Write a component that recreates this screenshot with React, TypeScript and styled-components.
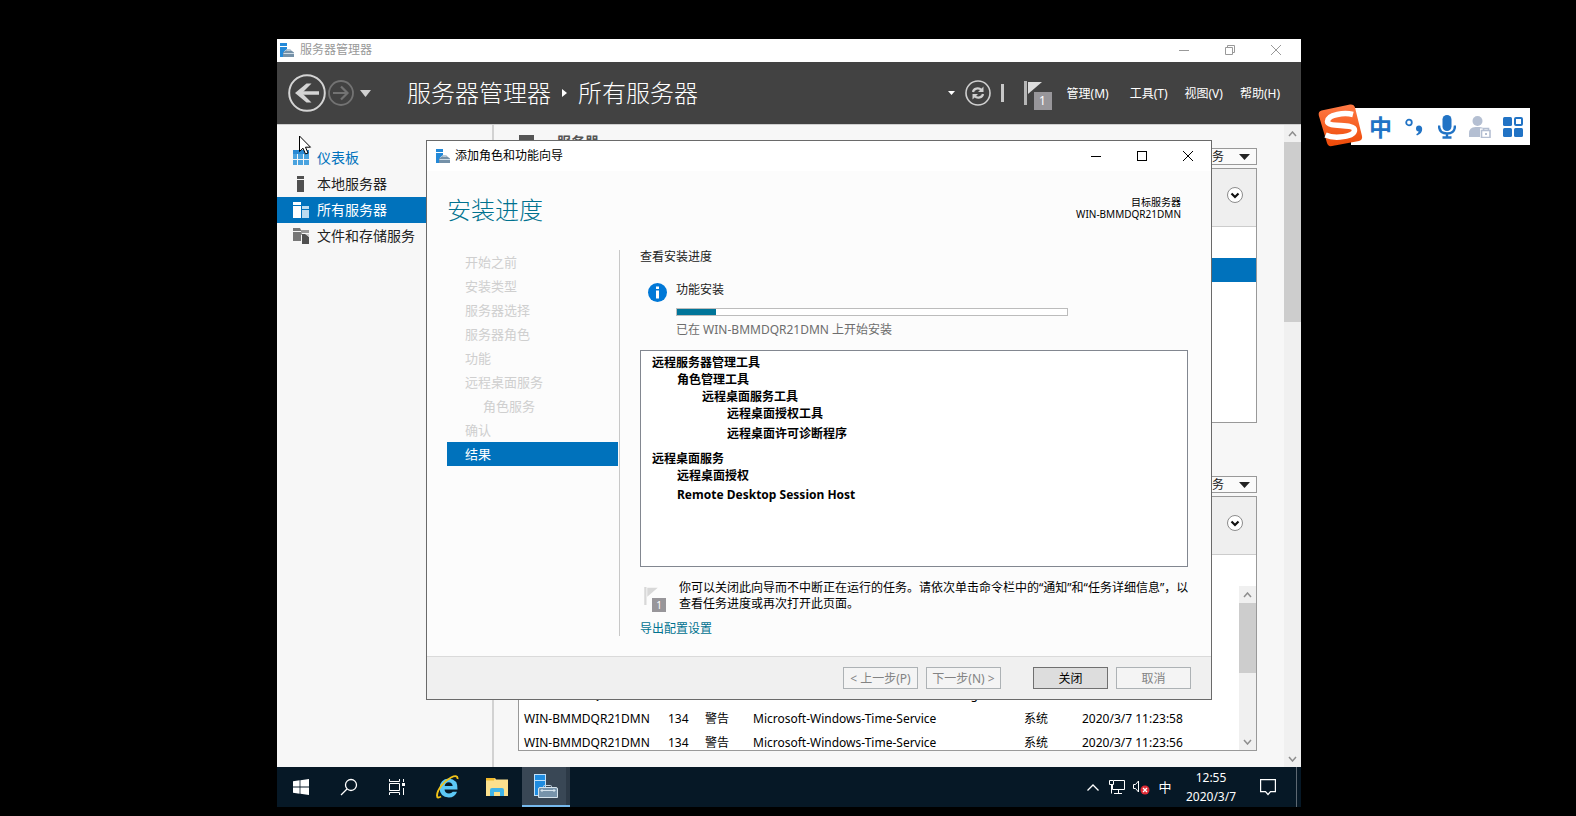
import React from 'react';
import styled, { createGlobalStyle, css } from 'styled-components';

const GlobalStyle = createGlobalStyle`
  *, *::before, *::after { box-sizing: border-box; }
  body {
    margin: 0;
    background: #000;
    font-family: "Noto Sans", "Noto Sans CJK SC", sans-serif;
    font-size: 12px;
    line-height: 16px;
    color: #000;
  }
  button { font: inherit; color: inherit; padding: 0; border: 0; background: none; }
  a { color: inherit; text-decoration: none; }
  ul, ol { list-style: none; margin: 0; padding: 0; }
  h1, h2, p { margin: 0; font-weight: 400; }
  svg { display: block; flex: none; }
`;

const Screen = styled.div`
  position: relative;
  display: flex;
  min-height: 100vh;
  padding: 39px 275px 9px 277px;
`;

const Session = styled.main`
  position: relative;
  flex: 1;
  min-width: 0;
  display: flex;
  flex-direction: column;
`;

/* ---------- Server Manager window ---------- */

const TitleBar = styled.div<{ $dialog?: boolean }>`
  display: flex;
  align-items: center;
  height: ${p => (p.$dialog ? 30 : 23)}px;
  padding: ${p => (p.$dialog ? '0 0 0 9px' : '0 2px 2px 3px')};
  gap: ${p => (p.$dialog ? 5 : 6)}px;
  background: #fff;
  color: ${p => (p.$dialog ? '#000' : '#999')};
`;

const TitleText = styled.span`
  flex: 1;
`;

const WindowButtons = styled.div`
  display: flex;
`;

const WindowButton = styled.button`
  display: grid;
  place-items: center;
  width: 46px;
  height: 20px;
`;

const Header = styled.header`
  display: flex;
  align-items: center;
  height: 63px;
  padding: 0 21px 0 11px;
  background: #424242;
  border-bottom: 1px solid #cfcfcf;
  color: #fff;
`;

const HistoryButtons = styled.div`
  display: flex;
  align-items: center;
  gap: 2px;
`;

const IconButton = styled.button`
  display: grid;
  place-items: center;
`;

const HistoryButton = styled(IconButton).attrs({ 'aria-label': '历史记录' })`
  margin-left: 6px;
`;

const RefreshButton = styled(IconButton)`
  margin-left: 10px;
`;

const Breadcrumb = styled.h1`
  flex: 1;
  display: flex;
  align-items: center;
  gap: 11px;
  margin-left: 36px;
  font-size: 24px;
  line-height: 32px;
  font-weight: 300;
  white-space: nowrap;
`;

const HeaderTools = styled.div`
  display: flex;
  align-items: center;
`;

const Divider = styled.span`
  width: 3px;
  height: 18px;
  margin: 0 20px 0 10px;
  background: #c8c8c8;
`;

const FlagButton = styled.button<{ $small?: boolean }>`
  position: relative;
  width: ${p => (p.$small ? 22 : 28)}px;
  height: ${p => (p.$small ? 25 : 34)}px;
  text-align: left;
  flex: none;
`;

const Badge = styled.span<{ $small?: boolean }>`
  position: absolute;
  right: 0;
  bottom: 0;
  width: ${p => (p.$small ? 14 : 18)}px;
  height: ${p => (p.$small ? 14 : 18)}px;
  font-size: ${p => (p.$small ? 10 : 12)}px;
  line-height: ${p => (p.$small ? 14 : 18)}px;
  text-align: center;
  background: #98969a;
  color: #fff;
`;

const MenuBar = styled.nav`
  display: flex;
  gap: 17px;
  margin-left: 15px;
  padding-top: 2px;
`;

const MenuButton = styled.button<{ $wide?: boolean }>`
  white-space: nowrap;
  margin-right: ${p => (p.$wide ? 4 : 0)}px;
`;

const Body = styled.div`
  flex: 1;
  display: flex;
  min-height: 0;
  background: #f7f7f7;
`;

const Sidebar = styled.nav`
  width: 217px;
  padding-top: 20px;
  border-right: 2px solid #d2d2d2;
`;

const SideLink = styled.a<{ $state?: 'active' | 'accent' }>`
  display: flex;
  align-items: center;
  gap: 8px;
  height: 26px;
  padding-left: 16px;
  font-size: 14px;
  color: ${p => (p.$state === 'active' ? '#fff' : p.$state === 'accent' ? '#0072bc' : '#222')};
  background: ${p => (p.$state === 'active' ? '#0072bc' : 'transparent')};
`;

const Content = styled.div`
  flex: 1;
  min-width: 0;
  display: flex;
  flex-direction: column;
  gap: 38px;
  padding: 8px 27px 16px 24px;
`;

const Section = styled.section`
  flex: 1;
  display: flex;
  flex-direction: column;
  gap: 3px;
`;

const SectionHead = styled.div`
  display: flex;
  align-items: flex-start;
  gap: 23px;
  height: 32px;
  padding-left: 1px;
`;

const SectionTitle = styled.h2`
  flex: 1;
  font-size: 14px;
  line-height: 18px;
  font-weight: 700;
  color: #555;
`;

const TasksButton = styled.button`
  display: flex;
  align-items: center;
  align-self: flex-end;
  justify-content: flex-end;
  gap: 15px;
  width: 74px;
  height: 17px;
  padding-right: 6px;
  border: 1px solid #999;
  background: #fafafa;
  color: #222;
`;

const Panel = styled.div`
  flex: 1 0 255px;
  height: 255px;
  display: flex;
  flex-direction: column;
  border: 1px solid #999;
  background: #fff;
  overflow: hidden;
`;

const FilterBar = styled.div`
  display: flex;
  justify-content: flex-end;
  align-items: center;
  height: 58px;
  padding: 0 13px 6px 0;
  background: #efefef;
  border-bottom: 1px solid #ccc;
`;

const ColumnHead = styled.div`
  height: 31px;
`;

const SelectedRow = styled.div`
  height: 24px;
  background: #0072bc;
`;

const EventArea = styled.div`
  flex: 1;
  display: flex;
  min-height: 0;
`;

const EventClip = styled.div`
  flex: 1;
  display: flex;
  flex-direction: column;
  justify-content: flex-end;
  overflow: hidden;
  margin-bottom: -5px;
`;

const EventTable = styled.table`
  width: 100%;
  table-layout: fixed;
  border-collapse: collapse;
  td { height: 24px; padding: 0; white-space: nowrap; }
  td:first-child { padding-left: 5px; }
`;

const Track = styled.div`
  display: flex;
  flex-direction: column;
  justify-content: space-between;
  width: 17px;
  background: #f0f0f0;
`;

const TrackButton = styled.button`
  display: grid;
  place-items: center;
  height: 17px;
  flex: none;
`;

const Thumb = styled.div<{ $length: number }>`
  height: ${p => p.$length}px;
  margin-bottom: auto;
  background: #cdcdcd;
`;

/* ---------- Wizard dialog ---------- */

const Dialog = styled.section`
  position: absolute;
  top: 101px;
  left: 149px;
  right: 89px;
  height: 560px;
  display: flex;
  flex-direction: column;
  border: 1px solid #6a6a6a;
  background: #fcfcfc;
`;

const DialogHead = styled.div`
  display: flex;
  justify-content: space-between;
  padding: 23px 30px 0 20px;
  height: 79px;
`;

const DialogTitle = styled.h2`
  font-size: 24px;
  line-height: 32px;
  font-weight: 300;
  color: #00728f;
`;

const Target = styled.p`
  text-align: right;
  font-size: 10px;
  line-height: 12px;
  padding-top: 2px;
`;

const DialogBody = styled.div`
  flex: 1;
  display: flex;
  min-height: 0;
  padding: 0 19px 0 20px;
`;

const Steps = styled.ol`
  width: 173px;
  margin-bottom: 20px;
  padding-right: 1px;
  border-right: 1px solid #c8c8c8;
`;

const Step = styled.li<{ $current?: boolean; $sub?: boolean }>`
  height: 24px;
  padding-left: ${p => (p.$sub ? 36 : 18)}px;
  font-size: 13px;
  line-height: 24px;
  color: #cfcfcf;
  ${p => p.$current && css`background: #0072bc; color: #fff;`}
`;

const Progress = styled.div`
  flex: 1;
  min-width: 0;
  display: flex;
  flex-direction: column;
  align-items: stretch;
  padding-left: 20px;
  color: #222;
`;

const Lead = styled.p`
  line-height: 14px;
`;

const Status = styled.div`
  display: flex;
  gap: 9px;
  margin: 18px 0 12px;
  padding-left: 8px;
`;

const StatusIcon = styled.span`
  width: 19px;
  padding-top: 1px;
`;

const StatusBody = styled.div`
  flex: 0 1 392px;
  display: flex;
  flex-direction: column;
`;

const Bar = styled.div`
  height: 8px;
  margin: 10px 0 6px;
  border: 1px solid #bcbcbc;
  background: #fff;
`;

const BarFill = styled.div`
  height: 100%;
  background: #007599;
`;

const Muted = styled.span`
  color: #6d6d6d;
`;

const ResultBox = styled.ul`
  flex: none;
  height: 217px;
  margin-right: 4px;
  padding: 3px 11px;
  border: 1px solid #828790;
  background: #fff;
  color: #000;
  font-weight: 700;
`;

const ResultItem = styled.li<{ $depth: number; $gap?: number }>`
  padding-left: ${p => p.$depth * 25}px;
  margin-top: ${p => p.$gap || 0}px;
  line-height: 17px;
`;

const Note = styled.div`
  display: flex;
  align-items: flex-end;
  gap: 13px;
  margin-top: 13px;
  padding-left: 4px;
  color: #000;
`;

const NoteText = styled.p`
  flex: 1;
`;

const ExportLink = styled.a`
  align-self: flex-start;
  margin-top: 9px;
  color: #00728f;
`;

const Footer = styled.footer`
  display: flex;
  gap: 8px;
  justify-content: flex-end;
  height: 43px;
  padding: 10px 20px 0 0;
  border-top: 1px solid #dadada;
  background: #f0f0f0;
`;

const DialogButton = styled.button<{ $primary?: boolean }>`
  width: 75px;
  height: 22px;
  padding-top: 1px;
  border: 1px solid ${p => (p.$primary ? '#707070' : '#adb2b5')};
  background: ${p => (p.$primary ? '#dddddd' : '#f4f4f4')};
  color: ${p => (p.$primary ? '#000' : '#838383')};
  ${p => p.$primary && css`margin-left: 24px;`}
`;

/* ---------- Taskbar ---------- */

const Taskbar = styled.footer`
  display: flex;
  justify-content: space-between;
  height: 40px;
  background: #061826;
  color: #fff;
`;

const TaskGroup = styled.div`
  display: flex;
  gap: 1px;
`;

const TaskPinned = styled.div`
  display: flex;
  margin-right: 2px;
`;

const TaskButton = styled.button<{ $active?: boolean }>`
  display: grid;
  place-items: center;
  width: 48px;
  height: 40px;
  ${p => p.$active && css`
    background: #394755;
    border-bottom: 2px solid #76b9ed;
    box-shadow: inset -4px 0 #2c3946;
  `}
`;

const Tray = styled.div`
  display: flex;
  align-items: center;
`;

const TrayButton = styled.button`
  display: grid;
  place-items: center;
  width: 24px;
  height: 40px;
  font-size: 13px;
`;

const Clock = styled.time`
  width: 68px;
  text-align: center;
  line-height: 19px;
`;

const NoticeButton = styled.button`
  display: grid;
  place-items: center;
  width: 46px;
  height: 40px;
`;

const ShowDesktop = styled.button`
  width: 5px;
  height: 40px;
  margin-left: 5px;
  border-left: 1px solid #5d6872;
`;

/* ---------- Floating input-method bar and pointer ---------- */

const ImeBar = styled.div`
  position: absolute;
  top: 104px;
  right: 46px;
  display: flex;
  align-items: flex-start;
`;

const ImeTools = styled.div`
  display: flex;
  align-items: center;
  height: 37px;
  margin: 4px 0 0 -12px;
  padding: 0 1px 0 13px;
  background: #fff;
`;

const ImeButton = styled.button`
  display: grid;
  place-items: center;
  width: 33px;
  height: 37px;
  color: #2173c5;
  font-size: 23px;
  line-height: 34px;
  font-weight: 700;
`;

const Logo = styled.svg`
  position: relative;
  z-index: 1;
`;

const Pointer = styled.svg`
  position: absolute;
  left: 22px;
  top: 96px;
`;

/* ---------- Icons ---------- */

const ManagerIcon = () => (
  <svg width="14" height="14" viewBox="0 0 14 14">
    <path d="M0 0h7v3H0zM0 4h7v2L4 8.500V14H0z" fill="#2389d8" />
    <path d="M6 8.500V7.800q0-.8.800-.8h3.400q.8 0 .8.800v.7" fill="none" stroke="#7591a8" />
    <path d="M3 9.500L5 8h7l2 1.500V14H3z" fill="#7591a8" />
    <path d="M3.500 10.500H14" stroke="#e6f0f8" strokeWidth=".8" />
  </svg>
);

const ManagerLargeIcon = () => (
  <svg width="24" height="24" viewBox="0 0 24 24">
    <rect x=".5" y=".5" width="11" height="21" fill="#1f8ce0" stroke="#bfe0fa" />
    <path d="M0 6.500h12" stroke="#bfe0fa" />
    <path d="M9.500 14v-1.500q0-1 1-1h6q1 0 1 1V14" fill="none" stroke="#c6d6e2" />
    <path d="M4.500 15q0-1.500 1.500-1.500h16q1.500 0 1.500 1.500v8.500h-19z" fill="#7793aa" stroke="#d6e3ec" />
    <path d="M6.500 16.500h15M8 15v3M20 15v3" stroke="#d6e3ec" />
  </svg>
);

const Minimize = () => (
  <svg width="10" height="10"><path d="M0 5.500h10" stroke="currentColor" /></svg>
);
const Maximize = () => (
  <svg width="10" height="10"><rect x=".5" y=".5" width="9" height="9" fill="none" stroke="currentColor" /></svg>
);
const Restore = () => (
  <svg width="10" height="10">
    <path d="M.5 2.500h7v7h-7zM2.500 2.500v-2h7v7h-2" fill="none" stroke="currentColor" />
  </svg>
);
const Close = () => (
  <svg width="10" height="10"><path d="M0 0l10 10M10 0L0 10" stroke="currentColor" /></svg>
);

const BackIcon = () => (
  <svg width="38" height="38" viewBox="0 0 38 38" fill="none">
    <circle cx="19" cy="19" r="17.800" stroke="#d4d4d4" strokeWidth="2" />
    <path d="M31 19H10" stroke="#d4d4d4" strokeWidth="3.500" />
    <path d="M18.500 9.500h5L14 19l9.500 9.500h-5L7 19z" fill="#d4d4d4" />
  </svg>
);
const ForwardIcon = () => (
  <svg width="26" height="26" viewBox="0 0 26 26" fill="none" stroke="#737373">
    <circle cx="13" cy="13" r="12" strokeWidth="1.800" />
    <path d="M5 13h14M13 6.500l6.500 6.500-6.500 6.500" strokeWidth="2.200" />
  </svg>
);
const Triangle = ({ w, h, fill = 'currentColor' }: { w: number; h: number; fill?: string }) => (
  <svg width={w} height={h}><path d={`M0 0h${w}L${w / 2} ${h}z`} fill={fill} /></svg>
);
const RefreshIcon = () => (
  <svg width="26" height="26" viewBox="0 0 26 26" fill="none" stroke="#d0d0d0">
    <circle cx="13" cy="13" r="12" strokeWidth="1.600" />
    <path d="M8 12c.5-3.500 5.500-5 8.500-2M18 14c-.5 3.500-5.500 5-8.500 2" strokeWidth="2.200" />
    <path d="M18.500 6.500v5.500h-5.500zM7.500 19.500V14H13z" fill="#d0d0d0" stroke="none" />
  </svg>
);
const FlagIcon = ({ small }: { small?: boolean }) => (
  <svg width={small ? 14 : 18} height={small ? 18 : 24} viewBox="0 0 18 24">
    <path d="M0 0h3v24H0z" fill={small ? '#d8d8d8' : '#b5b5b5'} />
    <path d="M4 1h14L4 13z" fill={small ? '#d8d8d8' : '#dcdcdc'} />
  </svg>
);
const CircleChevron = () => (
  <svg width="16" height="16" viewBox="0 0 16 16" fill="none">
    <circle cx="8" cy="8" r="7.500" fill="#fff" stroke="#8c8c8c" />
    <path d="M4.500 6.500L8 10l3.500-3.500" stroke="#111" strokeWidth="2.200" />
  </svg>
);
const Chevron = ({ up }: { up?: boolean }) => (
  <svg width="9" height="6" viewBox="0 0 9 6" fill="none">
    <path d={up ? 'M1 5l3.500-4L8 5' : 'M1 1l3.500 4L8 1'} stroke="#8e8e8e" strokeWidth="1.500" />
  </svg>
);

const DashboardIcon = () => (
  <svg width="16" height="16" viewBox="0 0 16 16" fill="#4aa3df">
    <path d="M0 0h16v4H0z" fill="#2a8ad4" />
    <path d="M0 4h4v5H0zM5 4h5v5H5zM11 4h5v5h-5zM0 10h4v5H0zM5 10h5v5H5zM11 10h5v5h-5z" />
  </svg>
);
const LocalIcon = () => (
  <svg width="16" height="16" viewBox="0 0 16 16" fill="#505050"><path d="M4 0h7v3H4zM4 4h7v12H4z" /></svg>
);
const AllIcon = () => (
  <svg width="16" height="16" viewBox="0 0 16 16" fill="#fff">
    <path d="M0 0h8v3H0zM0 4h8v12H0z" /><path d="M9 4h7v3H9zM9 8h7v8H9z" fill="#bcdcf0" />
  </svg>
);
const StorageIcon = () => (
  <svg width="16" height="16" viewBox="0 0 16 16" fill="#777">
    <path d="M0 0h7l1 2v1H0zM0 4h8v9H0z" /><path d="M8 2h8v3H9v2H8z" fill="#999" />
    <path d="M9 6h4l3 3v7H9z" fill="#505050" /><path d="M12 6h4v3z" fill="#ccc" />
  </svg>
);
const SectionIcon = () => (
  <svg width="15" height="15" viewBox="0 0 15 15"><path d="M0 2h15v13H0z" fill="#555" /></svg>
);
const InfoIcon = () => (
  <svg width="19" height="19" viewBox="0 0 19 19">
    <circle cx="9.500" cy="9.500" r="9.500" fill="#0078d7" />
    <path d="M8 3.500h3v2.500H8zM8 7.500h3v8H8z" fill="#fff" />
  </svg>
);

const StartIcon = () => (
  <svg width="16" height="16" viewBox="0 0 16 16" fill="#fff">
    <path d="M0 2.200L6.600 1.300v6.200H0zM7.400 1.200L16 0v7.500H7.400zM0 8.400h6.600v6.300L0 13.800zM7.400 8.400H16V16l-8.600-1.200z" />
  </svg>
);
const SearchIcon = () => (
  <svg width="18" height="18" viewBox="0 0 18 18" fill="none" stroke="#fff" strokeWidth="1.300">
    <circle cx="11" cy="7" r="5.500" /><path d="M7 11L1 17" />
  </svg>
);
const TaskViewIcon = () => (
  <svg width="17" height="16" viewBox="0 0 17 16" fill="none" stroke="#fff">
    <path d="M.5 0v2.500h10V0M.5 16v-2.500h10V16M.5 4.500h10v7H.500zM14.500 0v3M14.500 9v7" />
    <path d="M13 4h3v3h-3z" fill="#fff" stroke="none" />
  </svg>
);
const IeIcon = () => (
  <svg width="24" height="24" viewBox="0 0 24 24" fill="none">
    <path d="M21.500 14.500H8.500q.5 4 4.500 4 2.600 0 3.800-1.800h4.200Q19 22.500 12.800 22.500 3.800 22 3.500 13 4 4 12.800 3.500q9.200.5 8.700 11zM8.700 11h8Q16 7.300 12.700 7.300 9.400 7.300 8.700 11z" fill="#5cc8f5" />
    <path d="M5 21.500C2.500 23 1 23 1 20.500 1 15 8 6 15 2.500c4-2 7-2 6.500 1.500" stroke="#f2c318" strokeWidth="1.900" />
  </svg>
);
const FolderIcon = () => (
  <svg width="22" height="18" viewBox="0 0 22 18">
    <path d="M0 0h9l1 1.500h12V18H0z" fill="#fbe08d" /><path d="M0 0h9l-1 2.500H0z" fill="#f0b92c" />
    <path d="M4 18v-6q0-2 2-2h10q2 0 2 2v6h-4v-4H8v4z" fill="#3fb4e8" />
  </svg>
);
const TrayUp = () => (
  <svg width="12" height="7" viewBox="0 0 12 7" fill="none"><path d="M.5 6.500L6 1l5.500 5.500" stroke="#fff" strokeWidth="1.300" /></svg>
);
const NetworkIcon = () => (
  <svg width="16" height="14" viewBox="0 0 16 14" fill="none" stroke="#fff">
    <path d="M5 .5h10.500v9H3.500V5M5 13.500h8M9.500 9.500v4M.5.5h4v4h-4zM2.500 4.500v9" />
  </svg>
);
const SoundIcon = () => (
  <svg width="17" height="15" viewBox="0 0 17 15" fill="none">
    <path d="M.5 4.500h2l3-3.500v11l-3-3.500h-2z" stroke="#fff" />
    <circle cx="12" cy="10" r="4.500" fill="#e02b35" /><path d="M10 8l4 4M14 8l-4 4" stroke="#fff" strokeWidth="1.300" />
  </svg>
);
const NoticeIcon = () => (
  <svg width="16" height="17" viewBox="0 0 16 17" fill="none" stroke="#fff" strokeWidth="1.200">
    <path d="M.6.600h14.800v12H10.500L8 15.500l-2.500-2.900H.600z" />
  </svg>
);

const SogouLogo = () => (
  <Logo width="45" height="43" viewBox="0 0 45 43">
    <defs>
      <linearGradient id="sogou" x1="0" y1="0" x2="0" y2="1">
        <stop offset="0" stopColor="#ff7a45" /><stop offset="1" stopColor="#ee4a08" />
      </linearGradient>
    </defs>
    <path d="M3.500 6.500L32 .5q4-.5 5 3L44 32q.8 4-3 5l-27 5q-4 .800-5-3L.8 11.500q-.8-4 2.700-5z" fill="url(#sogou)" />
    <path d="M35 10.500C27 8.500 9.500 10 9.500 17.500c0 6.500 27 1.500 27 8.500 0 7-20 9-29 5" fill="none" stroke="#fff" strokeWidth="5.500" />
  </Logo>
);
const PunctuationIcon = () => (
  <svg width="18" height="18" viewBox="0 0 18 18" fill="none">
    <circle cx="4" cy="4.500" r="2.800" stroke="#2173c5" strokeWidth="1.800" />
    <path d="M11 10.500q0-3 3-3t3.200 3.500q0 4.500-5.200 6.500l-.8-1.200q2.300-1.300 2.500-2.800-2.700-.2-2.700-3z" fill="#2173c5" />
  </svg>
);
const MicIcon = () => (
  <svg width="18" height="24" viewBox="0 0 18 24" fill="none" stroke="#2173c5">
    <rect x="4.500" y="0" width="9" height="16" rx="4.500" fill="#2173c5" stroke="none" />
    <path d="M1 10.500q0 8 8 8t8-8M9 18v4M4.500 22.500h9" strokeWidth="2.400" />
  </svg>
);
const PersonIcon = () => (
  <svg width="22" height="22" viewBox="0 0 22 22" fill="#b4bfd2">
    <circle cx="8.500" cy="5" r="5" />
    <path d="M0 21v-3.500q0-6.500 6.500-6.500h4q3 0 4.500 1.500h-4V21z" />
    <path d="M12.500 14.500h8.500v7h-8.500zM14.500 14v-1.500h5V14" fill="#fff" stroke="#b4bfd2" strokeWidth="1.600" />
    <path d="M16 17h2v2h-2z" />
  </svg>
);
const GridIcon = () => (
  <svg width="20" height="20" viewBox="0 0 20 20" fill="#2173c5">
    <rect width="9" height="9" rx="1.500" /><rect y="11" width="9" height="9" rx="1.500" />
    <rect x="11" y="11" width="9" height="9" rx="1.500" />
    <rect x="12" y="1" width="7" height="7" rx="1" fill="#fff" stroke="#2173c5" strokeWidth="2" />
  </svg>
);

/* ---------- Data ---------- */

const steps = ['开始之前', '安装类型', '服务器选择', '服务器角色', '功能', '远程桌面服务', '角色服务', '确认', '结果'];

const results = [
  { text: '远程服务器管理工具', depth: 0 },
  { text: '角色管理工具', depth: 1 },
  { text: '远程桌面服务工具', depth: 2 },
  { text: '远程桌面授权工具', depth: 3 },
  { text: '远程桌面许可诊断程序', depth: 3, gap: 3 },
  { text: '远程桌面服务', depth: 0, gap: 8 },
  { text: '远程桌面授权', depth: 1 },
  { text: 'Remote Desktop Session Host', depth: 1, gap: 2 },
];

const events = [
  ['WIN-BMMDQR21DMN', '134', '警告', 'Microsoft-Windows-Kernel-EventTracing', '系统', '2020/3/7 11:24:02'],
  ['WIN-BMMDQR21DMN', '134', '警告', 'Microsoft-Windows-Time-Service', '系统', '2020/3/7 11:23:58'],
  ['WIN-BMMDQR21DMN', '134', '警告', 'Microsoft-Windows-Time-Service', '系统', '2020/3/7 11:23:56'],
];
const eventColumns = [149, 37, 48, 271, 58];

const ScrollTrack = ({ length }: { length: number }) => (
  <Track>
    <TrackButton aria-label="向上滚动"><Chevron up /></TrackButton>
    <Thumb $length={length} />
    <TrackButton aria-label="向下滚动"><Chevron /></TrackButton>
  </Track>
);

const Tasks = () => (
  <TasksButton>任务<Triangle w={11} h={6} fill="#222" /></TasksButton>
);

const Filter = () => (
  <FilterBar><IconButton aria-label="展开筛选"><CircleChevron /></IconButton></FilterBar>
);

export default function App() {
  return (
    <Screen>
      <GlobalStyle />
      <Session>
        <TitleBar>
          <ManagerIcon />
          <TitleText>服务器管理器</TitleText>
          <WindowButtons>
            <WindowButton aria-label="最小化"><Minimize /></WindowButton>
            <WindowButton aria-label="还原"><Restore /></WindowButton>
            <WindowButton aria-label="关闭窗口"><Close /></WindowButton>
          </WindowButtons>
        </TitleBar>
        <Header>
          <HistoryButtons>
            <IconButton aria-label="后退"><BackIcon /></IconButton>
            <IconButton aria-label="前进"><ForwardIcon /></IconButton>
          </HistoryButtons>
          <HistoryButton><Triangle w={11} h={7} fill="#d0d0d0" /></HistoryButton>
          <Breadcrumb>
            服务器管理器
            <svg width="5" height="8"><path d="M0 0l5 4-5 4z" fill="#fff" /></svg>
            所有服务器
          </Breadcrumb>
          <HeaderTools>
            <HistoryButton><Triangle w={7} h={4} /></HistoryButton>
            <RefreshButton aria-label="刷新"><RefreshIcon /></RefreshButton>
            <Divider />
            <FlagButton aria-label="通知"><FlagIcon /><Badge>1</Badge></FlagButton>
          </HeaderTools>
          <MenuBar>
            <MenuButton $wide>管理(M)</MenuButton>
            <MenuButton>工具(T)</MenuButton>
            <MenuButton>视图(V)</MenuButton>
            <MenuButton>帮助(H)</MenuButton>
          </MenuBar>
        </Header>
        <Body>
          <Sidebar>
            <SideLink href="#dashboard" $state="accent"><DashboardIcon />仪表板</SideLink>
            <SideLink href="#local"><LocalIcon />本地服务器</SideLink>
            <SideLink href="#all" $state="active"><AllIcon />所有服务器</SideLink>
            <SideLink href="#storage"><StorageIcon />文件和存储服务</SideLink>
          </Sidebar>
          <Content>
            <Section>
              <SectionHead>
                <SectionIcon />
                <SectionTitle>服务器</SectionTitle>
                <Tasks />
              </SectionHead>
              <Panel>
                <Filter />
                <ColumnHead />
                <SelectedRow />
              </Panel>
            </Section>
            <Section>
              <SectionHead>
                <SectionTitle />
                <Tasks />
              </SectionHead>
              <Panel>
                <Filter />
                <ColumnHead />
                <EventArea>
                  <EventClip>
                    <EventTable>
                      <colgroup>
                        {eventColumns.map((w, i) => <col key={i} width={w} />)}
                        <col />
                      </colgroup>
                      <tbody>
                        {events.map((row, i) => (
                          <tr key={i}>{row.map((cell, j) => <td key={j}>{cell}</td>)}</tr>
                        ))}
                      </tbody>
                    </EventTable>
                  </EventClip>
                  <ScrollTrack length={70} />
                </EventArea>
              </Panel>
            </Section>
          </Content>
          <ScrollTrack length={180} />
        </Body>
        <Taskbar>
          <TaskGroup>
            <TaskPinned>
              <TaskButton aria-label="开始"><StartIcon /></TaskButton>
              <TaskButton aria-label="搜索"><SearchIcon /></TaskButton>
              <TaskButton aria-label="任务视图"><TaskViewIcon /></TaskButton>
            </TaskPinned>
            <TaskButton aria-label="Internet Explorer"><IeIcon /></TaskButton>
            <TaskButton aria-label="文件资源管理器"><FolderIcon /></TaskButton>
            <TaskButton aria-label="服务器管理器" $active><ManagerLargeIcon /></TaskButton>
          </TaskGroup>
          <Tray>
            <TrayButton aria-label="显示隐藏的图标"><TrayUp /></TrayButton>
            <TrayButton aria-label="网络"><NetworkIcon /></TrayButton>
            <TrayButton aria-label="音量"><SoundIcon /></TrayButton>
            <TrayButton>中</TrayButton>
            <Clock>12:55<br />2020/3/7</Clock>
            <NoticeButton aria-label="操作中心"><NoticeIcon /></NoticeButton>
            <ShowDesktop aria-label="显示桌面" />
          </Tray>
        </Taskbar>

        <Dialog role="dialog" aria-label="添加角色和功能向导">
          <TitleBar $dialog>
            <ManagerIcon />
            <TitleText>添加角色和功能向导</TitleText>
            <WindowButtons>
              <WindowButton aria-label="最小化"><Minimize /></WindowButton>
              <WindowButton aria-label="最大化"><Maximize /></WindowButton>
              <WindowButton aria-label="关闭向导"><Close /></WindowButton>
            </WindowButtons>
          </TitleBar>
          <DialogHead>
            <DialogTitle>安装进度</DialogTitle>
            <Target>目标服务器<br />WIN-BMMDQR21DMN</Target>
          </DialogHead>
          <DialogBody>
            <Steps>
              {steps.map(s => (
                <Step key={s} $sub={s === '角色服务'} $current={s === '结果'}>{s}</Step>
              ))}
            </Steps>
            <Progress>
              <Lead>查看安装进度</Lead>
              <Status>
                <StatusIcon><InfoIcon /></StatusIcon>
                <StatusBody>
                  <span>功能安装</span>
                  <Bar role="progressbar" aria-label="功能安装" aria-valuenow={10} aria-valuemin={0} aria-valuemax={100}>
                    <BarFill style={{ width: '10%' }} />
                  </Bar>
                  <Muted>已在 WIN-BMMDQR21DMN 上开始安装</Muted>
                </StatusBody>
              </Status>
              <ResultBox>
                {results.map(r => (
                  <ResultItem key={r.text} $depth={r.depth} $gap={r.gap}>{r.text}</ResultItem>
                ))}
              </ResultBox>
              <Note>
                <FlagButton as="span" $small><FlagIcon small /><Badge $small>1</Badge></FlagButton>
                <NoteText>
                  你可以关闭此向导而不中断正在运行的任务。请依次单击命令栏中的“通知”和“任务详细信息”，以查看任务进度或再次打开此页面。
                </NoteText>
              </Note>
              <ExportLink href="#export">导出配置设置</ExportLink>
            </Progress>
          </DialogBody>
          <Footer>
            <DialogButton disabled>&lt; 上一步(P)</DialogButton>
            <DialogButton disabled>下一步(N) &gt;</DialogButton>
            <DialogButton $primary>关闭</DialogButton>
            <DialogButton disabled>取消</DialogButton>
          </Footer>
        </Dialog>

        <Pointer width="13" height="20" viewBox="0 0 13 20">
          <path d="M.500 1v15.500l3.500-3.300 2.500 5.800 2.500-1-2.500-5.800h5z" fill="#fff" stroke="#000" />
        </Pointer>
      </Session>

      <ImeBar>
        <SogouLogo />
        <ImeTools>
          <ImeButton>中</ImeButton>
          <ImeButton aria-label="标点"><PunctuationIcon /></ImeButton>
          <ImeButton aria-label="语音"><MicIcon /></ImeButton>
          <ImeButton aria-label="账户"><PersonIcon /></ImeButton>
          <ImeButton aria-label="工具箱"><GridIcon /></ImeButton>
        </ImeTools>
      </ImeBar>
    </Screen>
  );
}
